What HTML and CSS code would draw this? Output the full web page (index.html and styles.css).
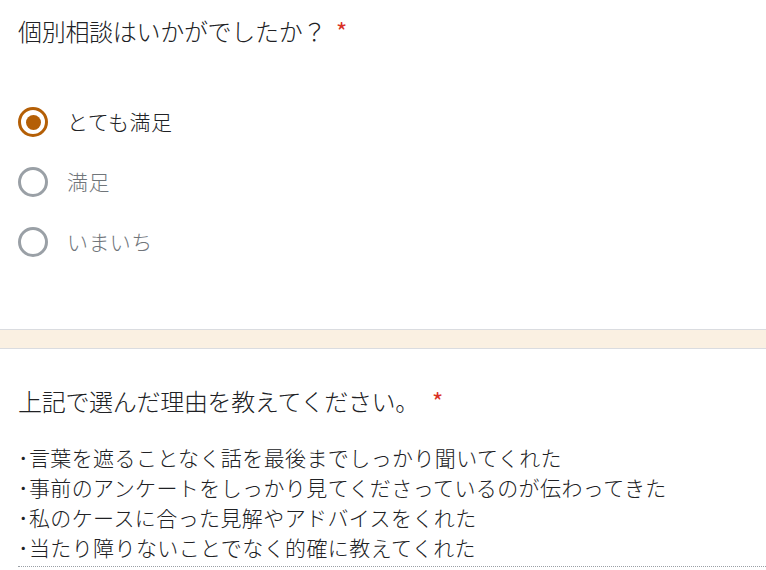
FILE: index.html
```html
<!DOCTYPE html>
<html lang="ja">
<head>
<meta charset="utf-8">
<link rel="stylesheet" href="styles.css">
</head>
<body>
<div class="card card-first">
  <div class="q-title">個別相談はいかがでしたか？<span class="req">*</span></div>
  <div class="options">
    <div class="option">
      <span class="radio checked"><span class="dot"></span></span>
      <span class="label label-on">とても満足</span>
    </div>
    <div class="option">
      <span class="radio"></span>
      <span class="label">満足</span>
    </div>
    <div class="option">
      <span class="radio"></span>
      <span class="label">いまいち</span>
    </div>
  </div>
</div>
<div class="gap"></div>
<div class="card card-second">
  <div class="q-title">上記で選んだ理由を教えてください。<span class="req req-wide">*</span></div>
  <div class="answer">
    <div class="line">･言葉を遮ることなく話を最後までしっかり聞いてくれた</div>
    <div class="line">･事前のアンケートをしっかり見てくださっているのが伝わってきた</div>
    <div class="line">･私のケースに合った見解やアドバイスをくれた</div>
    <div class="line">･当たり障りないことでなく的確に教えてくれた</div>
  </div>
</div>
</body>
</html>
```
FILE: styles.css
```css
html, body {
  margin: 0;
  padding: 0;
  background: #ffffff;
}
body {
  font-family: "Noto Sans CJK JP", "Noto Sans", sans-serif;
  font-weight: 300;
  color: #202124;
  overflow: hidden;
}
.card {
  background: #ffffff;
  padding-left: 18px;
}
.card-first {
  padding-top: 13px;
  padding-bottom: 57px;
}
.q-title {
  font-size: 24px;
  letter-spacing: -0.3px;
  line-height: 36px;
  color: #202124;
}
.req {
  color: #d93025;
  margin-left: 10px;
  font-size: 24px;
  font-weight: 400;
}
.req-wide {
  margin-left: 13px;
}
.options {
  margin-top: 43px;
  display: flex;
  flex-direction: column;
}
.option {
  display: flex;
  align-items: center;
  height: 60px;
}
.radio {
  box-sizing: border-box;
  width: 30px;
  height: 30px;
  border: 3px solid #9aa0a6;
  border-radius: 50%;
  display: flex;
  align-items: center;
  justify-content: center;
  flex: none;
}
.radio.checked {
  border-color: #b45f06;
}
.dot {
  width: 15px;
  height: 15px;
  border-radius: 50%;
  background: #b45f06;
}
.label {
  margin-left: 19px;
  font-size: 21px;
  letter-spacing: 0.4px;
  line-height: 30px;
  color: #70757a;
  position: relative;
  top: -1px;
}
.label-on {
  color: #202124;
}
.gap {
  height: 18px;
  background: #faf0e2;
  border-top: 1px solid #dadce0;
  border-bottom: 1px solid #dadce0;
}
.card-second {
  padding-top: 34px;
}
.answer {
  margin-top: 23px;
  border-bottom: 1px dotted #9aa0a6;
  padding-bottom: 4px;
}
.line {
  font-size: 21px;
  letter-spacing: 0.4px;
  line-height: 30px;
  color: #202124;
  white-space: nowrap;
}
```
